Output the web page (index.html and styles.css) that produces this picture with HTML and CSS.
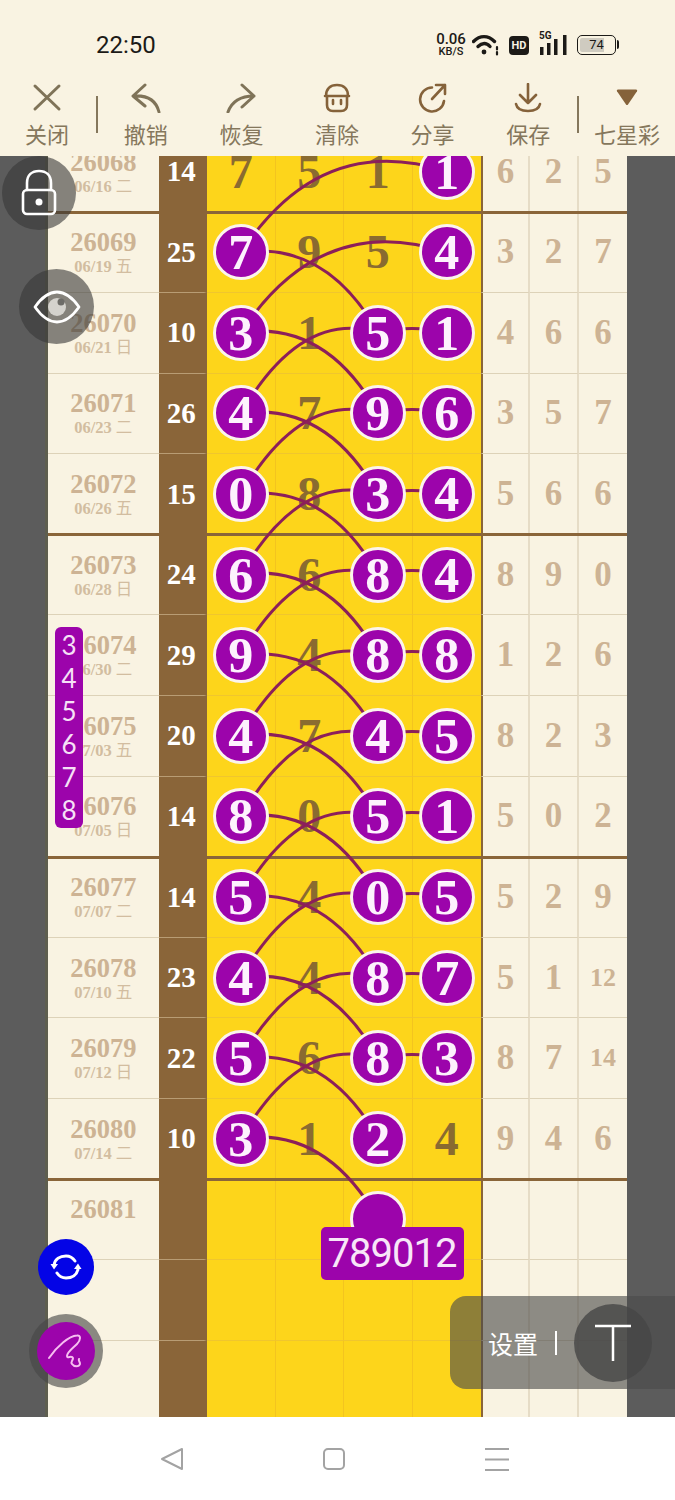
FILE: index.html
```html
<!DOCTYPE html>
<html lang="zh-CN">

<head>
    <meta charset="UTF-8">
    <meta name="viewport" content="width=device-width, initial-scale=1.0">
    <title>七星彩</title>
    <link rel="stylesheet" href="styles.css">
</head>

<body>
<div class="screen">

    <div class="status-bar">
        <div class="time">22:50</div>
        <div class="status-icons">
            <div class="speed"><span>0.06</span><span class="speed-unit">KB/S</span></div>
            <svg class="wifi" width="27" height="22" viewBox="0 0 27 22" fill="none" stroke="#1c1a17" stroke-linecap="round">
                <path d="M1.500 7.500C8 1 16 1 22.500 7.500" stroke-width="3.400"/>
                <path d="M6 12.500C10 8.500 14.500 8.500 18 12.500" stroke-width="3.400"/>
                <circle cx="12" cy="18" r="2.400" fill="#1c1a17" stroke="none"/>
                <path d="M25 13v2.500M25 18v2.500" stroke-width="2.200"/>
            </svg>
            <div class="hd">HD</div>
            <div class="signal">
                <span class="five-g">5G</span>
                <svg width="30" height="22" viewBox="0 0 30 22" fill="#1c1a17">
                    <rect x="1" y="13" width="3.500" height="8"/>
                    <rect x="8" y="9" width="3.500" height="12"/>
                    <rect x="15" y="5" width="3.500" height="16"/>
                    <rect x="24" y="1" width="3.500" height="20"/>
                </svg>
            </div>
            <div class="battery">74</div>
        </div>
    </div>

    <div class="toolbar">
        <div class="tool tool-first">
            <svg width="30" height="30" viewBox="0 0 30 30" fill="none" stroke="#7f7358" stroke-width="3" stroke-linecap="round"><path d="M3 3L27 26M27 3L3 26"/></svg>
            <span>关闭</span>
        </div>
        <div class="tool-sep"></div>
        <div class="tool-group">
            <div class="tool">
                <svg width="30" height="30" viewBox="0 0 30 30" fill="none" stroke="#7f7358" stroke-width="3" stroke-linecap="round" stroke-linejoin="round"><path d="M14 2L2 13L14 23M2 13C16 12 25 17 28 29"/></svg>
                <span>撤销</span>
            </div>
            <div class="tool">
                <svg width="30" height="30" viewBox="0 0 30 30" fill="none" stroke="#7f7358" stroke-width="3" stroke-linecap="round" stroke-linejoin="round"><path d="M16 2L28 13L16 24M28 13C15 13 6 18 2 29"/></svg>
                <span>恢复</span>
            </div>
            <div class="tool">
                <svg width="30" height="30" viewBox="0 0 30 30" fill="none" stroke="#85623a" stroke-width="2.600" stroke-linecap="round" stroke-linejoin="round"><path d="M4 13C4 6 8 2 15 2C22 2 26 6 26 13M3 13H27M5 13V22C5 26 7 28 11 28H19C23 28 25 26 25 22V13"/><path d="M11 17V21M19 17V21"/></svg>
                <span>清除</span>
            </div>
            <div class="tool">
                <svg width="30" height="30" viewBox="0 0 30 30" fill="none" stroke="#85623a" stroke-width="2.600" stroke-linecap="round" stroke-linejoin="round"><path d="M14 4.500A12 12 0 1 0 26 18"/><path d="M14 16L27 2M18 2H27V11"/></svg>
                <span>分享</span>
            </div>
            <div class="tool">
                <svg width="30" height="30" viewBox="0 0 30 30" fill="none" stroke="#85623a" stroke-width="2.600" stroke-linecap="round" stroke-linejoin="round"><path d="M15 1V20M7 12L15 20L23 12"/><path d="M3 21C4 26 9 28 15 28C21 28 26 26 27 21"/></svg>
                <span>保存</span>
            </div>
        </div>
        <div class="tool-sep tool-sep-last"></div>
        <div class="tool tool-last">
            <svg width="30" height="30" viewBox="0 0 30 30" fill="#85623a"><path d="M6 6.500H24C25 6.500 25.500 7.300 25 8.200L16 21.500C15.500 22.200 14.500 22.200 14 21.500L5 8.200C4.500 7.300 5 6.500 6 6.500Z"/></svg>
            <span>七星彩</span>
        </div>
    </div>

    <div class="board">
        <div class="rows">
            <div class="row row-end">
                <div class="date"><div class="issue">26068</div><div class="day">06/16 <span class="weekday">二</span></div></div>
                <div class="sum">14</div>
                <div class="draw"><span class="digit">7</span></div>
                <div class="draw"><span class="digit">5</span></div>
                <div class="draw"><span class="digit">1</span></div>
                <div class="draw"><span class="ball">1</span></div>
                <div class="tail">6</div><div class="tail">2</div><div class="tail">5</div>
            </div>
            <div class="row">
                <div class="date"><div class="issue">26069</div><div class="day">06/19 <span class="weekday">五</span></div></div>
                <div class="sum">25</div>
                <div class="draw"><span class="ball">7</span></div>
                <div class="draw"><span class="digit">9</span></div>
                <div class="draw"><span class="digit">5</span></div>
                <div class="draw"><span class="ball">4</span></div>
                <div class="tail">3</div><div class="tail">2</div><div class="tail">7</div>
            </div>
            <div class="row">
                <div class="date"><div class="issue">26070</div><div class="day">06/21 <span class="weekday">日</span></div></div>
                <div class="sum">10</div>
                <div class="draw"><span class="ball">3</span></div>
                <div class="draw"><span class="digit">1</span></div>
                <div class="draw"><span class="ball">5</span></div>
                <div class="draw"><span class="ball">1</span></div>
                <div class="tail">4</div><div class="tail">6</div><div class="tail">6</div>
            </div>
            <div class="row">
                <div class="date"><div class="issue">26071</div><div class="day">06/23 <span class="weekday">二</span></div></div>
                <div class="sum">26</div>
                <div class="draw"><span class="ball">4</span></div>
                <div class="draw"><span class="digit">7</span></div>
                <div class="draw"><span class="ball">9</span></div>
                <div class="draw"><span class="ball">6</span></div>
                <div class="tail">3</div><div class="tail">5</div><div class="tail">7</div>
            </div>
            <div class="row row-end">
                <div class="date"><div class="issue">26072</div><div class="day">06/26 <span class="weekday">五</span></div></div>
                <div class="sum">15</div>
                <div class="draw"><span class="ball">0</span></div>
                <div class="draw"><span class="digit">8</span></div>
                <div class="draw"><span class="ball">3</span></div>
                <div class="draw"><span class="ball">4</span></div>
                <div class="tail">5</div><div class="tail">6</div><div class="tail">6</div>
            </div>
            <div class="row">
                <div class="date"><div class="issue">26073</div><div class="day">06/28 <span class="weekday">日</span></div></div>
                <div class="sum">24</div>
                <div class="draw"><span class="ball">6</span></div>
                <div class="draw"><span class="digit">6</span></div>
                <div class="draw"><span class="ball">8</span></div>
                <div class="draw"><span class="ball">4</span></div>
                <div class="tail">8</div><div class="tail">9</div><div class="tail">0</div>
            </div>
            <div class="row">
                <div class="date"><div class="issue">26074</div><div class="day">06/30 <span class="weekday">二</span></div></div>
                <div class="sum">29</div>
                <div class="draw"><span class="ball">9</span></div>
                <div class="draw"><span class="digit">4</span></div>
                <div class="draw"><span class="ball">8</span></div>
                <div class="draw"><span class="ball">8</span></div>
                <div class="tail">1</div><div class="tail">2</div><div class="tail">6</div>
            </div>
            <div class="row">
                <div class="date"><div class="issue">26075</div><div class="day">07/03 <span class="weekday">五</span></div></div>
                <div class="sum">20</div>
                <div class="draw"><span class="ball">4</span></div>
                <div class="draw"><span class="digit">7</span></div>
                <div class="draw"><span class="ball">4</span></div>
                <div class="draw"><span class="ball">5</span></div>
                <div class="tail">8</div><div class="tail">2</div><div class="tail">3</div>
            </div>
            <div class="row row-end">
                <div class="date"><div class="issue">26076</div><div class="day">07/05 <span class="weekday">日</span></div></div>
                <div class="sum">14</div>
                <div class="draw"><span class="ball">8</span></div>
                <div class="draw"><span class="digit">0</span></div>
                <div class="draw"><span class="ball">5</span></div>
                <div class="draw"><span class="ball">1</span></div>
                <div class="tail">5</div><div class="tail">0</div><div class="tail">2</div>
            </div>
            <div class="row">
                <div class="date"><div class="issue">26077</div><div class="day">07/07 <span class="weekday">二</span></div></div>
                <div class="sum">14</div>
                <div class="draw"><span class="ball">5</span></div>
                <div class="draw"><span class="digit">4</span></div>
                <div class="draw"><span class="ball">0</span></div>
                <div class="draw"><span class="ball">5</span></div>
                <div class="tail">5</div><div class="tail">2</div><div class="tail">9</div>
            </div>
            <div class="row">
                <div class="date"><div class="issue">26078</div><div class="day">07/10 <span class="weekday">五</span></div></div>
                <div class="sum">23</div>
                <div class="draw"><span class="ball">4</span></div>
                <div class="draw"><span class="digit">4</span></div>
                <div class="draw"><span class="ball">8</span></div>
                <div class="draw"><span class="ball">7</span></div>
                <div class="tail">5</div><div class="tail">1</div><div class="tail tail-small">12</div>
            </div>
            <div class="row">
                <div class="date"><div class="issue">26079</div><div class="day">07/12 <span class="weekday">日</span></div></div>
                <div class="sum">22</div>
                <div class="draw"><span class="ball">5</span></div>
                <div class="draw"><span class="digit">6</span></div>
                <div class="draw"><span class="ball">8</span></div>
                <div class="draw"><span class="ball">3</span></div>
                <div class="tail">8</div><div class="tail">7</div><div class="tail tail-small">14</div>
            </div>
            <div class="row row-end">
                <div class="date"><div class="issue">26080</div><div class="day">07/14 <span class="weekday">二</span></div></div>
                <div class="sum">10</div>
                <div class="draw"><span class="ball">3</span></div>
                <div class="draw"><span class="digit">1</span></div>
                <div class="draw"><span class="ball">2</span></div>
                <div class="draw"><span class="digit">4</span></div>
                <div class="tail">9</div><div class="tail">4</div><div class="tail">6</div>
            </div>
            <div class="row">
                <div class="date"><div class="issue">26081</div><div class="day">&nbsp;</div></div>
                <div class="sum"></div>
                <div class="draw"></div>
                <div class="draw"></div>
                <div class="draw"><span class="ball"></span><div class="pick-label">789012</div></div>
                <div class="draw"></div>
                <div class="tail"></div><div class="tail"></div><div class="tail"></div>
            </div>
            <div class="row">
                <div class="date"></div>
                <div class="sum"></div>
                <div class="draw"></div><div class="draw"></div><div class="draw"></div><div class="draw"></div>
                <div class="tail"></div><div class="tail"></div><div class="tail"></div>
            </div>
            <div class="row">
                <div class="date"></div>
                <div class="sum"></div>
                <div class="draw"></div><div class="draw"></div><div class="draw"></div><div class="draw"></div>
                <div class="tail"></div><div class="tail"></div><div class="tail"></div>
            </div>
        </div>

        <!-- links between balls, coordinates are page pixels -->
        <svg class="links" width="675" height="1261" viewBox="0 156.500 675 1261" fill="none" stroke="#8c1f5a" stroke-width="3">
            <path d="M241 253Q321 131 447 172M241 333Q321 211 447 253"/>
            <path d="M241 414Q301 310 378 333M241 495Q301 391 378 414M241 575Q301 471 378 495M241 656Q301 552 378 575M241 736Q301 632 378 656M241 817Q301 713 378 736M241 898Q301 794 378 817M241 978Q301 874 378 898M241 1059Q301 955 378 978M241 1139Q301 1035 378 1059"/>
            <path d="M241 253Q326 241 378 333M241 333Q326 321 378 414M241 414Q326 402 378 495M241 495Q326 483 378 575M241 575Q326 563 378 656M241 656Q326 644 378 736M241 736Q326 724 378 817M241 817Q326 805 378 898M241 898Q326 886 378 978M241 978Q326 966 378 1059M241 1059Q326 1047 378 1139M241 1139Q326 1127 378 1220"/>
            <path d="M378 333Q412 325 447 333M378 414Q412 406 447 414M378 495Q412 487 447 495M378 575Q412 567 447 575M378 656Q412 648 447 656M378 736Q412 728 447 736M378 817Q412 809 447 817M378 898Q412 890 447 898M378 978Q412 970 447 978M378 1059Q412 1051 447 1059"/>
        </svg>
    </div>

    <div class="float-btn lock-btn">
        <svg width="36" height="48" viewBox="0 0 36 48" fill="none" stroke="#fff" stroke-width="2.600" stroke-linecap="round" stroke-linejoin="round">
            <path d="M6 21V14C6 6 11 2 18 2C25 2 30 6 30 14V21"/>
            <rect x="2" y="21" width="32" height="24" rx="4"/>
            <circle cx="18" cy="33" r="3.500" fill="#fff" stroke="none"/>
        </svg>
    </div>
    <div class="float-btn eye-btn">
        <svg width="48" height="34" viewBox="0 0 48 34" fill="none" stroke="#fff" stroke-width="2.800" stroke-linejoin="round">
            <path d="M2 17C9 7 16 2 24 2C32 2 39 7 46 17C39 27 32 32 24 32C16 32 9 27 2 17Z"/>
            <circle cx="24" cy="17" r="9" fill="#d4d2cd" stroke="none"/>
            <circle cx="28" cy="12" r="3.500" fill="#6d6c68" stroke="none"/>
        </svg>
    </div>

    <div class="pick-column">
        <span>3</span><span>4</span><span>5</span><span>6</span><span>7</span><span>8</span>
    </div>

    <div class="float-btn sync-btn">
        <svg width="32" height="28" viewBox="0 0 32 28" fill="none" stroke="#fff" stroke-width="3" stroke-linecap="round">
            <path d="M4 12C5 6 10 3 16 3C20 3 23 5 25 8"/>
            <path d="M28 16C27 22 22 25 16 25C12 25 9 23 7 20"/>
            <path d="M0.500 11H8L4 16.500Z" fill="#fff" stroke="none"/>
            <path d="M24 16H31.500L28 10.500Z" fill="#fff" stroke="none"/>
        </svg>
    </div>
    <div class="sign-ring">
        <div class="sign-btn">
            <svg width="38" height="40" viewBox="0 0 38 40" fill="none" stroke="#f6bdf0" stroke-width="2" stroke-linecap="round" stroke-linejoin="round">
                <path d="M2 27C10 15 22 5 30 4.500C34 4 34 9 30 13C26 17 20 21 20 25C20 28 25 24 26 27C26 30 23 31 25 33C27 36 32 36 33 33C33 30 31 30 32 28"/>
            </svg>
        </div>
    </div>

    <div class="settings-panel">
        <span class="settings-label">设置</span>
        <span class="settings-sep"></span>
        <div class="settings-btn">
            <svg width="38" height="38" viewBox="0 0 38 38" fill="none" stroke="#fff" stroke-width="2.500"><path d="M1 2H37M19 2V37"/></svg>
        </div>
    </div>

    <div class="nav-bar">
        <svg width="26" height="24" viewBox="0 0 26 24" fill="none" stroke="#a3a3a3" stroke-width="2" stroke-linejoin="round"><path d="M23 2V22L3 12Z"/></svg>
        <svg width="24" height="24" viewBox="0 0 24 24" fill="none" stroke="#a3a3a3" stroke-width="2"><rect x="2" y="2" width="20" height="20" rx="4"/></svg>
        <svg width="26" height="24" viewBox="0 0 26 24" fill="none" stroke="#a3a3a3" stroke-width="2"><path d="M1 2H25M1 12.500H25M1 23H25"/></svg>
    </div>

</div>
</body>

</html>
```

FILE: styles.css
```css
* {
    box-sizing: border-box;
}

body {
    margin: 0;
    font-family: "Liberation Serif", "Noto Sans CJK SC", serif;
}

.screen {
    position: relative;
    width: 675px;
    height: 1500px;
    overflow: hidden;
    background: #fff;
}

/* status bar */
.status-bar {
    display: flex;
    align-items: center;
    justify-content: space-between;
    height: 80px;
    padding: 10px 59px 0 96px;
    background: #f9f3e2;
    color: #1c1a17;
    font-family: Roboto, sans-serif;
}

.time {
    font-size: 24px;
}

.status-icons {
    display: flex;
    align-items: center;
}

.speed {
    display: flex;
    flex-direction: column;
    align-items: center;
    width: 32px;
    font-size: 15px;
    font-weight: 500;
    line-height: 13px;
}

.speed-unit {
    font-size: 11px;
    line-height: 11px;
}

.wifi {
    margin-left: 5px;
}

.hd {
    width: 20px;
    height: 19px;
    margin-left: 10px;
    border-radius: 4px;
    background: #1c1a17;
    color: #f9f3e2;
    font-size: 11px;
    font-weight: 700;
    line-height: 19px;
    text-align: center;
}

.signal {
    position: relative;
    display: flex;
    margin-left: 10px;
}

.five-g {
    position: absolute;
    top: -4px;
    left: 0;
    font-size: 10px;
    font-weight: 700;
}

.battery {
    position: relative;
    width: 39px;
    height: 20px;
    margin-left: 8px;
    padding: 2px;
    border: 1.5px solid #1c1a17;
    border-radius: 5px;
    background: linear-gradient(to right, #cfcbc0 74%, transparent 74%) content-box;
    font-size: 13px;
    line-height: 13px;
    text-align: center;
}

.battery::after {
    content: "";
    position: absolute;
    top: 4px;
    right: -4px;
    width: 2px;
    height: 9px;
    border-radius: 0 2px 2px 0;
    background: #1c1a17;
}

/* toolbar */
.toolbar {
    display: flex;
    height: 76px;
    padding-top: 3px;
    background: #f9f3e2;
    color: #85775c;
    font-family: "Noto Sans CJK SC", sans-serif;
    font-size: 22px;
}

.tool {
    display: flex;
    flex: 1;
    flex-direction: column;
    align-items: center;
    gap: 4px;
    line-height: 32px;
    white-space: nowrap;
}

.tool svg {
    flex: none;
}

.tool-first {
    flex: none;
    width: 94px;
    margin-right: 2px;
}

.tool-last {
    flex: none;
    width: 96px;
}

.tool-group {
    display: flex;
    width: 478px;
}

.tool-sep {
    flex: none;
    width: 2px;
    height: 37px;
    margin-top: 13px;
    background: #85775c;
}

.tool-sep-last {
    margin-left: 1px;
}

/* chart */
.board {
    position: relative;
    height: 1261px;
    overflow: hidden;
    background: #5c5c5c;
}

.rows {
    margin-top: -24.1px;
}

.row {
    position: relative;
    display: grid;
    grid-template-columns: 110.5px 48.5px repeat(4, 68.5px) 49px 49px 48px;
    width: 579px;
    height: 80.6px;
    margin-left: 48px;
    box-shadow: -3px 0 0 #5e5e4f;
}

.row-end::after {
    content: "";
    position: absolute;
    z-index: 1;
    left: 0;
    right: 0;
    bottom: -1.5px;
    height: 3px;
    background: #8a6539;
}

.date,
.sum,
.draw,
.tail {
    display: flex;
    align-items: center;
    justify-content: center;
    border-bottom: 1px solid;
}

.date {
    flex-direction: column;
    padding-top: 2px;
    background: #f9f3e2;
    border-bottom-color: #ddd2b8;
    color: #cdb394;
    font-weight: 700;
}

.issue {
    font-size: 26.500px;
    line-height: 27px;
}

.day {
    font-size: 16.500px;
    line-height: 21px;
    color: #d2bda0;
}

.weekday {
    font-weight: 400;
}

.sum {
    background: #8a6539;
    border-right: 3px solid #8a6539;
    border-bottom-color: #b89c74;
    color: #fff;
    font-size: 29px;
    font-weight: 700;
}

.draw {
    position: relative;
    background: #fdd51b;
    border-right: 1px solid #f3c41f;
    border-bottom-color: #f0c62e;
    color: #8a6b30;
    font-size: 48px;
    font-weight: 700;
}

.draw:nth-child(6) {
    border-right: 0;
}

.digit {
    line-height: 1;
}

.ball {
    position: relative;
    z-index: 2;
    display: flex;
    align-items: center;
    justify-content: center;
    flex: none;
    width: 56px;
    height: 56px;
    border: 3px solid #fbf4ec;
    border-radius: 50%;
    background: #9c04ab;
    color: #fdf2fd;
    font-size: 50px;
    line-height: 1;
}

.pick-label {
    position: absolute;
    z-index: 3;
    top: 47px;
    left: -23.5px;
    width: 143px;
    height: 53px;
    border-radius: 5px;
    background: #9c04ab;
    color: #f8e6f8;
    font-family: Roboto, sans-serif;
    font-size: 40px;
    font-weight: 400;
    letter-spacing: -1px;
    line-height: 53px;
    text-align: center;
}

.tail {
    background: #f9f3e2;
    border-right: 2px solid #e6dcc6;
    border-bottom-color: #ddd2b8;
    color: #cdb394;
    font-size: 35px;
    font-weight: 700;
}

.tail:nth-child(7) {
    margin-left: -1px;
    border-left: 3px solid #8a6539;
}

.tail:last-child {
    border-right: 0;
}

.tail-small {
    font-size: 26px;
}

.links {
    position: absolute;
    z-index: 1;
    top: 0;
    left: 0;
}

/* floating controls */
.float-btn {
    position: absolute;
    z-index: 4;
    display: flex;
    align-items: center;
    justify-content: center;
    border-radius: 50%;
}

.lock-btn {
    top: 156px;
    left: 2px;
    width: 74px;
    height: 74px;
    background: rgba(55, 55, 55, 0.6);
}

.eye-btn {
    top: 269px;
    left: 19px;
    width: 75px;
    height: 75px;
    background: rgba(55, 55, 55, 0.6);
}

.pick-column {
    position: absolute;
    z-index: 4;
    top: 627px;
    left: 55px;
    display: flex;
    flex-direction: column;
    align-items: center;
    width: 28px;
    height: 201px;
    padding-top: 2px;
    border-radius: 6px;
    background: #9c04ab;
    color: #f6e0f6;
    font-family: Lato, sans-serif;
    font-size: 26px;
    line-height: 33px;
}

.sync-btn {
    top: 1239px;
    left: 38px;
    width: 56px;
    height: 56px;
    background: #0404e6;
}

.sign-ring {
    position: absolute;
    z-index: 4;
    top: 1314px;
    left: 29px;
    display: flex;
    align-items: center;
    justify-content: center;
    width: 74px;
    height: 74px;
    border-radius: 50%;
    background: rgba(70, 70, 70, 0.62);
}

.sign-btn {
    display: flex;
    align-items: center;
    justify-content: center;
    width: 58px;
    height: 58px;
    border-radius: 50%;
    background: #9c04ab;
}

.settings-panel {
    position: absolute;
    z-index: 4;
    top: 1296px;
    left: 450px;
    display: flex;
    align-items: center;
    width: 225px;
    height: 93px;
    padding-left: 38px;
    border-radius: 16px 0 0 16px;
    background: rgba(75, 75, 75, 0.62);
    color: #fff;
    font-family: "Noto Sans CJK SC", sans-serif;
    font-size: 25px;
}

.settings-sep {
    width: 2px;
    height: 24px;
    margin-left: 17px;
    background: #fff;
}

.settings-btn {
    display: flex;
    align-items: center;
    justify-content: center;
    width: 78px;
    height: 78px;
    margin-left: 17px;
    border-radius: 50%;
    background: rgba(70, 70, 70, 0.8);
}

/* bottom nav */
.nav-bar {
    display: flex;
    align-items: center;
    height: 83px;
    background: #fff;
}

.nav-bar svg {
    flex: none;
    margin-left: 159px;
}

.nav-bar svg:nth-child(2) {
    margin-left: 137px;
}

.nav-bar svg:nth-child(3) {
    margin-left: 138px;
}
```
